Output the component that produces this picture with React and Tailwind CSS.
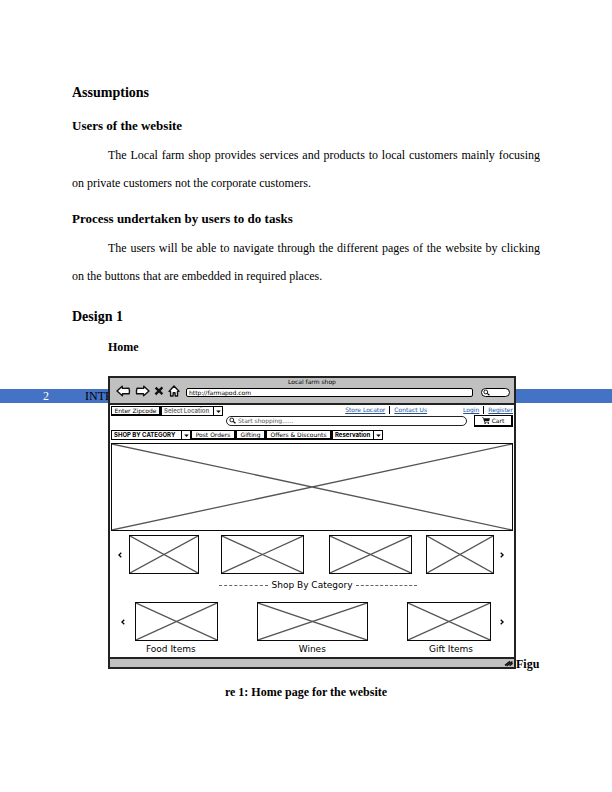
import React from 'react';
import clsx from 'clsx';

const topRow = ['Product 1', 'Product 2', 'Product 3', 'Product 4'];

const categories = ['Food Items', 'Wines', 'Gift Items'];

// Crossed box used wherever an image will go
function Placeholder({ label, className }) {
  return (
    <svg
      role="img"
      aria-label={label}
      viewBox="0 0 100 100"
      preserveAspectRatio="none"
      className={clsx('block w-full border border-[#111] bg-white outline-1 -outline-offset-1 outline-black/40', className)}
    >
      <path d="M0 0 L100 100 M0 100 L100 0" fill="none" stroke="#555" strokeWidth="1.3" vectorEffect="non-scaling-stroke" />
    </svg>
  );
}

function Caret() {
  return (
    <span className="pointer-events-none absolute inset-y-0 right-0 flex w-[9px] items-center justify-center border-l border-black">
      <svg viewBox="0 0 6 4" className="h-[3px] w-[5px]"><path d="M0 0.5 H6 L3 4 Z" fill="#000" /></svg>
    </span>
  );
}

function Dropdown({ label, className }) {
  return (
    <div className={clsx('relative h-[10px] border border-black bg-white', className)}>
      <select aria-label={label} className="block h-full w-full appearance-none bg-transparent pl-[2px] font-['Inter',sans-serif] text-[6px] leading-[8px] font-bold outline-none">
        <option>{label}</option>
      </select>
      <Caret />
    </div>
  );
}

function TabButton({ children, className }) {
  return (
    <button className={clsx('h-[10px] border border-r-2 border-b-2 border-black bg-white text-center text-[6px] leading-[7px] whitespace-nowrap', className)}>
      {children}
    </button>
  );
}

function Magnifier({ className }) {
  return (
    <svg viewBox="0 0 8 8" className={clsx('h-[7px] w-[7px] shrink-0', className)} fill="none" stroke="#000">
      <circle cx="3.2" cy="3.4" r="2.2" strokeWidth="1" />
      <path d="M4.8 5 L7.4 7.2" strokeWidth="1.4" />
    </svg>
  );
}

function Arrow({ direction }) {
  return (
    <button aria-label={direction === 'left' ? 'Previous' : 'Next'} className="flex items-center justify-center">
      <svg viewBox="0 0 4 6" className="h-[6px] w-[4px]" fill="none" stroke="#000" strokeWidth="1.3">
        {direction === 'left' ? <path d="M3.3 0.8 L0.9 3 L3.3 5.2" /> : <path d="M0.7 0.8 L3.1 3 L0.7 5.2" />}
      </svg>
    </button>
  );
}

function BrowserBar() {
  return (
    <div className="h-[27px] border-b-2 border-[#222] bg-[#c0c0c0]">
      <p className="h-[7px] text-center text-[6px] leading-[7px]">Local farm shop</p>
      <div className="flex h-[12px] items-center pr-1 pl-[6px]">
        <button aria-label="Back" className="mr-[4px]">
          <svg viewBox="0 0 15 12" className="h-[12px] w-[15px]" fill="#fff" stroke="#111" strokeWidth="1.4" strokeLinejoin="round">
            <path d="M1 6 L6.2 1.2 L6.4 3.4 L13 3.2 Q13.9 6 13.2 8.8 L6.6 8.6 L6.4 10.8 Z" />
          </svg>
        </button>
        <button aria-label="Forward" className="mr-[4px]">
          <svg viewBox="0 0 15 12" className="h-[12px] w-[15px]" fill="#fff" stroke="#111" strokeWidth="1.4" strokeLinejoin="round">
            <path d="M14 6 L8.8 1.2 L8.6 3.4 L2 3.2 Q1.1 6 1.6 8.8 L8.4 8.6 L8.6 10.8 Z" />
          </svg>
        </button>
        <button aria-label="Stop" className="mr-[4px]">
          <svg viewBox="0 0 10 12" className="h-[12px] w-[10px]" fill="none" stroke="#111" strokeWidth="2.4">
            <path d="M1.6 2.6 L8.4 9.2 M8.4 2.4 L1.4 9.4" />
          </svg>
        </button>
        <button aria-label="Home page" className="mr-[6px]">
          <svg viewBox="0 0 12 12" className="h-[12px] w-[12px]" fill="#fff" stroke="#111" strokeWidth="1.4" strokeLinejoin="round">
            <path d="M1 6.4 L6 1 L11 6.2 L9.4 6.6 L9.6 11 L7.2 11 L7 7.8 L5.2 7.8 L5 11 L2.6 11 L2.6 6.6 Z" />
          </svg>
        </button>
        <input
          aria-label="Address"
          defaultValue="http://farmapod.com"
          className="mt-[3px] h-[9px] min-w-0 flex-1 rounded-[2px] border border-black bg-white px-[2px] text-[6px] leading-[7px] outline-none"
        />
        <div className="mt-[3px] ml-[8px] flex h-[9px] w-[29px] items-center rounded-full border border-black bg-white">
          <Magnifier className="ml-px" />
          <input aria-label="Search the web" className="h-[5px] w-0 min-w-0 flex-1 bg-transparent text-[6px] outline-none" />
        </div>
      </div>
    </div>
  );
}

function ShopHeader() {
  return (
    <div className="flex h-[25px] gap-[3px] pt-px">
      <div className="flex w-[112px] items-start">
        <TabButton className="w-[50px]">Enter Zipcode</TabButton>
        <Dropdown label="Select Location" className="flex-1 text-[#777]" />
      </div>
      <div className="flex flex-1 flex-col">
        <div className="flex h-[8px] items-center justify-end text-[6px] leading-[8px] text-[#1f5596]">
          <a href="#stores" className="underline">Store Locator</a>
          <span className="mx-[4px] h-[8px] w-px bg-black" />
          <a href="#contact" className="underline">Contact Us</a>
          <a href="#login" className="ml-[36px] underline">Login</a>
          <span className="mx-[4px] h-[8px] w-px bg-black" />
          <a href="#register" className="underline">Register</a>
        </div>
        <div className="flex items-center">
          <div className="flex h-[10px] flex-1 items-center rounded-full border border-[#222] bg-white pl-[2px]">
            <Magnifier />
            <input aria-label="Search the shop" placeholder="Start shopping......" className="h-[8px] min-w-0 flex-1 bg-transparent pl-[2px] text-[6px] leading-[8px] outline-none placeholder:text-[#555]" />
          </div>
          <button className="mt-px ml-[7px] flex h-[12px] w-[39px] items-center justify-center gap-[2px] border border-r-2 border-b-2 border-black bg-white text-[6px] leading-[8px]">
            <svg viewBox="0 0 8 7" className="h-[7px] w-[8px]" fill="#111">
              <path d="M0 0.4 H1.5 L1.9 1.2 H8 L7.2 4 H2.7 L2.9 4.7 H7 V5.4 H2.3 L1.1 1.1 H0 Z" />
              <circle cx="3.1" cy="6.2" r="0.8" />
              <circle cx="6.4" cy="6.2" r="0.8" />
            </svg>
            Cart
          </button>
        </div>
      </div>
    </div>
  );
}

function HomeWireframe() {
  return (
    <div className="min-w-0 flex-1 border-2 border-[#222] bg-white font-['DejaVu_Sans',sans-serif] text-black">
      <BrowserBar />
      <div className="px-px">
        <ShopHeader />
        <nav className="flex">
          <Dropdown label="SHOP BY CATEGORY" className="w-[80px]" />
          <TabButton className="w-[45px]">Post Orders</TabButton>
          <TabButton className="w-[30px]">Gifting</TabButton>
          <TabButton className="w-[66px]">Offers &amp; Discounts</TabButton>
          <Dropdown label="Reservation" className="w-[51px]" />
        </nav>
        <Placeholder label="Banner" className="mt-[3px] h-[88px]" />
        <div className="mt-[4px] grid grid-cols-[18fr_70fr_22fr_83fr_25fr_83fr_14fr_68fr_16fr] items-center pr-[3px]">
          <Arrow direction="left" />
          {topRow.map((name, i) => (
            <React.Fragment key={name}>
              {i > 0 && <span />}
              <Placeholder label={name} className="h-[39px]" />
            </React.Fragment>
          ))}
          <Arrow direction="right" />
        </div>
        <div className="mt-[5px] flex items-center justify-center gap-[4px] pl-[12px]">
          <span className="w-[49px] border-t border-dashed border-[#666]" />
          <h4 className="text-[9px] leading-[12px]">Shop By Category</h4>
          <span className="w-[61px] border-t border-dashed border-[#666]" />
        </div>
        <div className="mt-[11px] grid grid-cols-[24fr_83fr_39fr_111fr_39fr_84fr_22fr] items-center">
          <Arrow direction="left" />
          {categories.map((name, i) => (
            <React.Fragment key={name}>
              {i > 0 && <span />}
              <Placeholder label={name} className="h-[39px]" />
            </React.Fragment>
          ))}
          <Arrow direction="right" />
        </div>
        <div className="mt-[2px] flex justify-between pr-[40px] pb-[2px] pl-[35px] text-[9px] leading-[12px]">
          {categories.map((name) => (
            <p key={name} className="whitespace-nowrap">{name}</p>
          ))}
        </div>
      </div>
      <div className="flex h-[10px] items-center justify-end border-t-2 border-[#222] bg-[#c0c0c0]">
        <svg viewBox="0 0 10 7" className="h-[7px] w-[10px]" fill="none" stroke="#111" strokeWidth="1.4">
          <path d="M1 5.4 L6 1.4 M2.6 6 L8.4 1.6 M5.6 5.8 L8.6 3.2" />
        </svg>
      </div>
    </div>
  );
}

export default function App() {
  return (
    <main className="min-h-screen bg-white pt-[79px] pb-[86px] font-['Liberation_Serif',serif] text-[12px] leading-[28px] text-black">
      <section className="px-[72px]">
        <h1 className="text-[14px] font-bold">Assumptions</h1>
        <h2 className="mt-[5px] text-[13px] font-bold">Users of the website</h2>
        <p className="mt-px text-justify indent-[36px]">
          The Local farm shop provides services and products to local customers mainly focusing on private customers not
          the corporate customers.
        </p>
        <h2 className="mt-[8px] text-[13px] font-bold">Process undertaken by users to do tasks</h2>
        <p className="mt-px text-justify indent-[36px]">
          The users will be able to navigate through the different pages of the website by clicking on the buttons that
          are embedded in required places.
        </p>
        <h1 className="mt-[13px] text-[14px] font-bold">Design 1</h1>
        <h3 className="mt-[2px] pl-[36px] font-bold">Home</h3>
      </section>

      <figure className="relative mt-[15px] px-[72px]">
        {/* running header sits behind the figure */}
        <div className="absolute inset-x-0 top-[13px] flex h-[14px] items-center bg-[#4472c4] text-[12px] leading-[14px]">
          <span className="w-[85px] pl-[43px] text-white">2</span>
          <span>INTR</span>
        </div>
        <div className="relative flex items-end pl-[36px]">
          <HomeWireframe />
          <span className="w-[24px] text-[12px] leading-[10px] font-bold">Figu</span>
        </div>
        <figcaption className="mt-[9px] text-center font-bold">re 1: Home page for the website</figcaption>
      </figure>
    </main>
  );
}
